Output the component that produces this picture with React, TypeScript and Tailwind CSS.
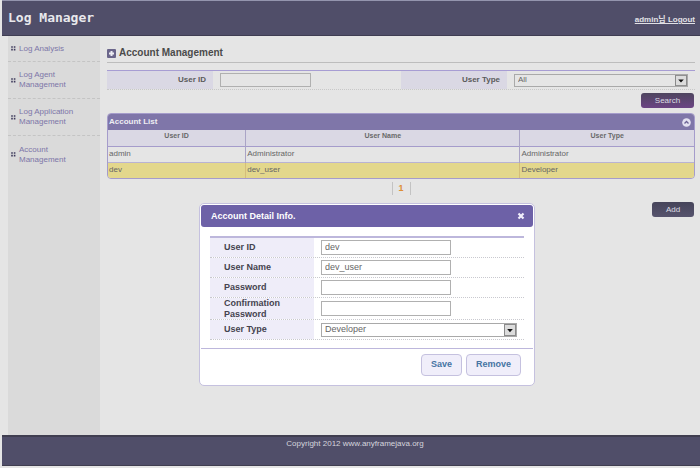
import { useState } from "react";
import type { ReactNode, SelectHTMLAttributes } from "react";

const menu = ["Log Analysis", "Log Agent Management", "Log Application Management", "Account Management"];

const accounts = [
  { id: "admin", name: "Administrator", type: "Administrator" },
  { id: "dev", name: "dev_user", type: "Developer" },
];

function Bullet() {
  return (
    <svg width="5" height="5" viewBox="0 0 5 5" className="shrink-0" aria-hidden="true">
      <path d="M0.2 0.2h1.6v1.6H0.2zM2.8 0.2h1.6v1.6H2.8zM0.2 2.8h1.6v1.6H0.2zM2.8 2.8h1.6v1.6H2.8z" fill="#3f3b5c" />
    </svg>
  );
}

function Select({ className, ...props }: SelectHTMLAttributes<HTMLSelectElement>) {
  return (
    <div className={`relative ${className ?? ""}`}>
      <select
        {...props}
        className="block h-full w-full appearance-none rounded-none border border-[#a9a9a9] bg-transparent pl-[3px] leading-none outline-none"
      />
      <svg
        className="pointer-events-none absolute top-px right-px bottom-px h-[calc(100%-2px)] w-3"
        viewBox="0 0 12 12"
        preserveAspectRatio="none"
        aria-hidden="true"
      >
        <rect x="0.5" y="0.5" width="11" height="11" fill="#dcdcdc" stroke="#8a8a8a" />
        <path d="M3.2 5h5.6L6 8.2z" fill="#111" />
      </svg>
    </div>
  );
}

function FormRow({ id, label, tall, children }: { id: string; label: string; tall?: boolean; children: ReactNode }) {
  return (
    <div className={`flex border-b border-dotted border-[#c9c9cf] ${tall ? "h-[22px]" : "h-5"}`}>
      <div className="flex w-[104px] items-center bg-[#efedf9] pl-3.5">
        <label htmlFor={id} className="w-16 text-[9px] leading-[11px] font-bold text-[#45434f]">
          {label}
        </label>
      </div>
      <div className="flex flex-1 items-center pl-[7px] text-[9px] text-[#666]">{children}</div>
    </div>
  );
}

function Field({ id, type = "text", value = "" }: { id: string; type?: string; value?: string }) {
  return (
    <input
      id={id}
      type={type}
      defaultValue={value}
      className="h-[15px] w-[130px] border border-[#b0b0b0] bg-white pb-px pl-[3px] outline-none"
    />
  );
}

function AccountDialog({ onClose }: { onClose: () => void }) {
  return (
    <section
      role="dialog"
      aria-labelledby="dialog-title"
      className="absolute top-[203px] left-[199px] w-[336px] rounded-[5px] border border-[#c5c1df] bg-white p-px"
    >
      <div className="flex h-[22px] items-center justify-between rounded-[3px] bg-[#6d61a7] pr-2 pl-2.5 text-white">
        <h2 id="dialog-title" className="pt-px text-[9px] font-bold">
          Account Detail Info.
        </h2>
        <button type="button" aria-label="Close" onClick={onClose}>
          <svg width="8" height="8" viewBox="0 0 8 8" className="block">
            <path d="M1.5 1.5l5 5M6.5 1.5l-5 5" stroke="#f1effb" strokeWidth="2.2" />
          </svg>
        </button>
      </div>
      <form onSubmit={(e) => e.preventDefault()}>
        <div className="mx-[9px] mt-[9px] mb-2 border-t-2 border-[#bdb7dc]">
          <FormRow id="d-id" label="User ID">
            <Field id="d-id" value="dev" />
          </FormRow>
          <FormRow id="d-name" label="User Name">
            <Field id="d-name" value="dev_user" />
          </FormRow>
          <FormRow id="d-pw" label="Password">
            <Field id="d-pw" type="password" />
          </FormRow>
          <FormRow id="d-pw2" label="Confirmation Password" tall>
            <Field id="d-pw2" type="password" />
          </FormRow>
          <FormRow id="d-type" label="User Type">
            <Select id="d-type" className="mr-[7px] h-3.5 flex-1" defaultValue="Developer">
              <option>Developer</option>
              <option>Administrator</option>
            </Select>
          </FormRow>
        </div>
        <div className="flex h-9 items-start justify-end gap-1 border-t border-[#bdb7dc] pt-[5px] pr-3 text-[9px] font-bold text-[#4674a3]">
          <button type="submit" className="h-[22px] w-[41px] rounded-[4px] border border-[#c5c1df] bg-[#f0eefa]">
            Save
          </button>
          <button type="button" className="h-[22px] w-[55px] rounded-[4px] border border-[#c5c1df] bg-[#f0eefa]">
            Remove
          </button>
        </div>
      </form>
    </section>
  );
}

export default function App() {
  const [open, setOpen] = useState(true);
  return (
    <div className="relative flex min-h-screen flex-col bg-[#e5e5e5] pb-[2px] pl-[2px] font-['Liberation_Sans','Noto_Sans_CJK_KR',sans-serif] text-[8px] text-[#666]">
      <header className="flex h-9 items-center justify-between border-t border-b border-t-[#9495ae] border-b-[#3f3d52] bg-[#504e69] pr-[5px] pl-1.5">
        <h1 className="font-['DejaVu_Sans_Mono',monospace] text-[13px] font-bold text-[#e8e8ec]">Log Manager</h1>
        <a href="#logout" className="mt-1 font-bold text-[#e1e1e6] underline">
          admin님 Logout
        </a>
      </header>

      <div className="flex flex-1">
        <nav className="ml-1.5 w-[92px] bg-[#dadada] text-[#7d76a8]">
          <ul>
            {menu.map((item, i) => (
              <li
                key={item}
                className={`flex items-center gap-[3px] pl-[3px] leading-[10px] ${
                  i === 0 ? "h-[26px]" : "h-[37px]"
                } ${i < menu.length - 1 ? "border-b border-dashed border-[#c4c4c4]" : ""}`}
              >
                <Bullet />
                <a href="#menu" className="w-[60px]">
                  {item}
                </a>
              </li>
            ))}
          </ul>
        </nav>

        <main className="min-w-0 flex-1 pr-[5px] pl-[7px]">
          <div className="flex h-[27px] items-end gap-[3px] border-b border-[#bdbdbd] pb-[3px]">
            <svg width="9" height="9" viewBox="0 0 9 9" className="mb-px" aria-hidden="true">
              <rect width="9" height="9" rx="1" fill="#6b668b" />
              <path d="M4.5 2v5M2 4.5h5" stroke="#eeedf4" strokeWidth="2" />
            </svg>
            <h2 className="text-[10px] leading-3 font-bold text-[#4b4b4b]">Account Management</h2>
          </div>

          <form onSubmit={(e) => e.preventDefault()}>
            <div className="mt-[7px] grid h-5 grid-cols-2 border-t border-b border-t-[#a79dd3] border-b-[#c8c8c8] [border-bottom-style:dotted]">
              <div className="flex items-center">
                <label
                  htmlFor="s-id"
                  className="flex h-full w-[106px] items-center justify-end bg-[#dad8e4] pr-[7px] font-bold text-[#5b5b5b]"
                >
                  User ID
                </label>
                <input
                  id="s-id"
                  className="ml-[7px] h-3.5 w-[91px] border border-[#b0b0b0] bg-transparent outline-none"
                />
              </div>
              <div className="flex items-center">
                <label
                  htmlFor="s-type"
                  className="flex h-full w-[106px] items-center justify-end bg-[#dad8e4] pr-[7px] font-bold text-[#5b5b5b]"
                >
                  User Type
                </label>
                <Select id="s-type" className="mr-[7px] ml-[7px] h-[13px] flex-1">
                  <option>All</option>
                  <option>Developer</option>
                </Select>
              </div>
            </div>
            <div className="flex justify-end pt-[3px] pr-px">
              <button
                type="submit"
                className="h-[15px] w-[53px] rounded-[3px] bg-linear-to-b from-[#4e455f] to-[#6b4384] text-[#dddde4]"
              >
                Search
              </button>
            </div>
          </form>

          <section className="mt-[5px] overflow-hidden rounded-[4px] border border-[#a59ccb]">
            <div className="flex h-4 items-center justify-between bg-[#7f76a9] pr-[3px] pl-px">
              <h3 className="font-bold text-[#eeedf3]">Account List</h3>
              <button type="button" aria-label="Collapse list">
                <svg width="9" height="9" viewBox="0 0 9 9" className="block">
                  <circle cx="4.5" cy="4.5" r="4.3" fill="#e2dff0" />
                  <path d="M2.5 5.5l2-2 2 2" fill="none" stroke="#6a6194" strokeWidth="1.3" />
                </svg>
              </button>
            </div>
            <table className="w-full table-fixed border-collapse">
              <colgroup>
                <col className="w-[23.5%]" />
                <col className="w-[46.8%]" />
                <col />
              </colgroup>
              <thead>
                <tr className="h-4 border-b border-[#a59ccb] bg-[#dad8e4] text-[7px] leading-[10px] text-[#686868]">
                  <th className="border-r border-[#aaa4c6] p-0 pb-1">User ID</th>
                  <th className="border-r border-[#aaa4c6] p-0 pb-1">User Name</th>
                  <th className="p-0 pb-1">User Type</th>
                </tr>
              </thead>
              <tbody>
                {accounts.map((a) => (
                  <tr
                    key={a.id}
                    className={`h-4 leading-[10px] ${
                      a.id === "dev" ? "bg-[#e3d78c] *:border-[#d5bd7a]" : "border-b border-[#b9b3d3] *:border-[#aaa4c6]"
                    }`}
                  >
                    <td className="border-r p-0 pl-px">{a.id}</td>
                    <td className="border-r p-0 pl-px">{a.name}</td>
                    <td className="p-0 pl-px">{a.type}</td>
                  </tr>
                ))}
              </tbody>
            </table>
          </section>

          <div className="mt-[3px] flex justify-center">
            <a
              href="#page-1"
              className="flex h-[13px] w-[19px] items-center justify-center border-r border-l border-[#c3c3c3] text-[9px] font-bold text-[#dd8e36]"
            >
              1
            </a>
          </div>
          <div className="mt-[7px] flex justify-end pr-px">
            <button
              type="button"
              onClick={() => setOpen(true)}
              className="h-[15px] w-[42px] rounded-[3px] bg-linear-to-b from-[#46445a] to-[#56536d] text-[#dddde4]"
            >
              Add
            </button>
          </div>
        </main>
      </div>

      <footer className="h-[31px] border-t-2 border-b border-t-[#403e50] border-b-[#403e50] bg-[#504e69] pt-px pl-2 text-center leading-3 text-[#d5d5dd]">
        Copyright 2012 www.anyframejava.org
      </footer>

      {open && <AccountDialog onClose={() => setOpen(false)} />}
    </div>
  );
}
